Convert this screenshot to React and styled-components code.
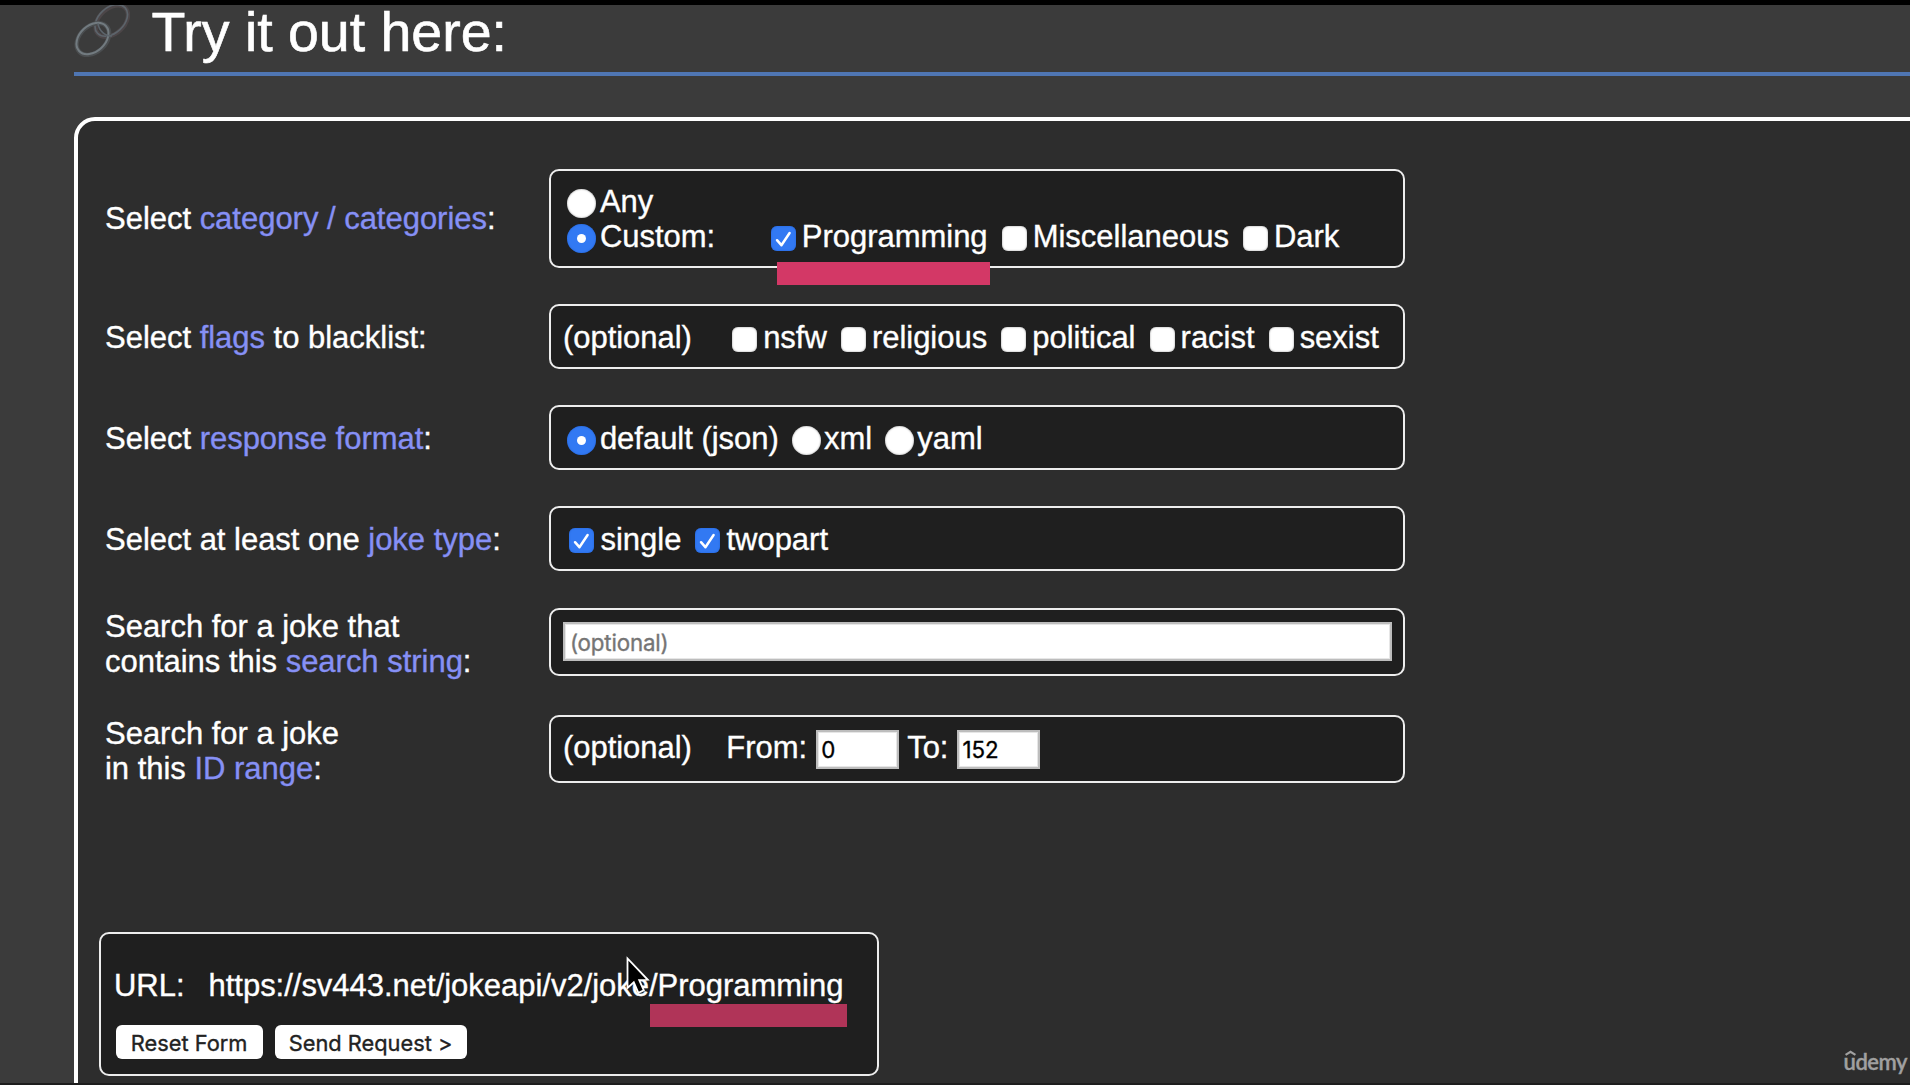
import React from "react";
import styled, { createGlobalStyle, css } from "styled-components";

const GlobalStyle = createGlobalStyle`
  * { box-sizing: border-box; }
  body {
    margin: 0;
    background: #3b3b3b;
    overflow: hidden;
  }
`;

const Page = styled.div`
  position: relative;
  display: flex;
  flex-direction: column;
  width: 1910px;
  height: 1085px;
  overflow: hidden;
  background: #3b3b3b;
  border-top: 5px solid #000;
  border-bottom: 2px solid #1d1d1d;
  color: #fff;
  font: 31px/35.4px "Liberation Sans", Arial, sans-serif;
  letter-spacing: -0.02px;
  -webkit-text-stroke: 0.35px currentColor;
`;

const Header = styled.header`
  display: flex;
  align-items: flex-start;
  flex: none;
  height: 71px;
  margin-left: 74px;
  border-bottom: 4px solid #4f76b3;
`;

const LinkIcon = styled.svg`
  flex: none;
  width: 56px;
  height: 56px;
`;

const Title = styled.h1`
  margin: -5px 0 0 21.5px;
  font-size: 55.5px;
  line-height: 64px;
  font-weight: 400;
  white-space: nowrap;
  -webkit-text-stroke-width: 0.6px;
`;

const Panel = styled.main`
  display: flex;
  flex-direction: column;
  align-items: flex-start;
  flex: none;
  width: 1900px;
  height: 1100px;
  margin: 41px 0 0 74px;
  padding: 48px 0 0 21px;
  border: 4px solid #fff;
  border-radius: 21px;
  background: #2d2d2d;
`;

const Form = styled.form`
  display: grid;
  grid-template-columns: 443.5px 856px;
  grid-template-rows: 99px 64.5px 64.5px 64.5px 71px 71px;
  row-gap: 36.4px;
  margin-left: 6px;
`;

const Row = styled.div`
  display: grid;
  grid-template-columns: subgrid;
  grid-column: 1 / -1;
  align-items: center;
`;

const Label = styled.div`
  margin: ${(p) => p.$drop ?? 1.5}px 0 -${(p) => p.$drop ?? 1.5}px;
`;

const LabelLine = styled.div`
  white-space: nowrap;
`;

const Term = styled.a`
  color: #8690f5;
`;

const boxFrame = css`
  border: 2px solid #ededed;
  border-radius: 10px;
  background: #1f1f1f;
`;

const Box = styled.div`
  ${boxFrame}
  display: flex;
  flex-direction: column;
  justify-content: center;
  height: ${(p) => p.$height}px;
  margin: -${(p) => p.$lift ?? 0}px 0 ${(p) => p.$lift ?? 0}px;
  padding: ${(p) => p.$drop ?? 2}px 0 0 12.4px;
`;

const Line = styled.div`
  display: flex;
  align-items: center;
  height: 35px;
  white-space: nowrap;
`;

const Words = styled.span`
  margin: 0 ${(p) => p.$gap ?? 0}px ${(p) => p.$raise ?? 0}px 0;
`;

const Option = styled.label`
  display: flex;
  align-items: center;
  margin-right: ${(p) => p.$gap ?? 7.5}px;
`;

const Check = styled.span`
  display: flex;
  align-items: center;
  justify-content: center;
  flex: none;
  width: 25px;
  height: 25px;
  margin: 3px 6px 0 6.6px;
  border-radius: 6px;
  background: ${(p) => (p.$on ? "#3279f3" : "#fff")};
  box-shadow: inset 0 0 2px ${(p) => (p.$on ? "#2260d0" : "#8a8a8a")};
`;

const Radio = styled.span`
  display: flex;
  align-items: center;
  justify-content: center;
  flex: none;
  width: 29px;
  height: 29px;
  margin: 3.4px 3.4px 0 4.6px;
  border-radius: 50%;
  background: ${(p) => (p.$on ? "#3279f3" : "#fff")};
  box-shadow: inset 0 0 2px ${(p) => (p.$on ? "#2260d0" : "#8a8a8a")};

  &::after {
    content: "";
    display: ${(p) => (p.$on ? "block" : "none")};
    width: 9px;
    height: 9px;
    border-radius: 50%;
    background: #fff;
  }
`;

const Field = styled.input`
  width: ${(p) => p.$width};
  height: 39px;
  margin: ${(p) => p.$margin || "0"};
  padding: 1px 4px 0 ${(p) => p.$indent || 3}px;
  border: 2px solid #bdbdbd;
  border-radius: 0;
  outline: none;
  background: #fff;
  box-shadow: inset 0 0 0 1px #e6e6e6;
  color: #000;
  font: 22.3px Inter, sans-serif;
  letter-spacing: ${(p) => p.$spacing || "0"};

  &::placeholder {
    color: #757575;
    opacity: 1;
  }
`;

const Request = styled.section`
  ${boxFrame}
  display: flex;
  flex-direction: column;
  flex: none;
  width: 780px;
  height: 144px;
  margin-top: 146.5px;
  padding: 34px 0 0 13px;
`;

const Url = styled.div`
  display: flex;
  height: 36px;
  white-space: nowrap;
`;

const UrlName = styled.span`
  width: 94.5px;
`;

const Buttons = styled.div`
  display: flex;
  gap: 12px;
  margin: 21.5px 0 0 1.6px;
`;

const Button = styled.button`
  width: ${(p) => p.$width}px;
  height: 34px;
  padding: 2px 0 0;
  border: 0;
  border-radius: 6px;
  background: #fff;
  color: #222;
  font: 21.8px Inter, sans-serif;
  white-space: nowrap;
`;

const Marker = styled.div`
  position: absolute;
  left: ${(p) => p.$x}px;
  top: ${(p) => p.$y - 5}px;
  width: ${(p) => p.$width}px;
  height: 23px;
  background: ${(p) => p.$color};
`;

const Cursor = styled.svg`
  position: absolute;
  left: 625px;
  top: 950px;
  width: 28px;
  height: 42px;
`;

const Watermark = styled.div`
  position: absolute;
  right: 3px;
  bottom: 8px;
  color: #a0a0a0;
  font: 600 22px/26px Lato, sans-serif;
  letter-spacing: -0.5px;
`;

const Hat = styled.svg`
  position: absolute;
  left: 1px;
  top: 1px;
  width: 11px;
  height: 6px;
`;

const Tick = () => (
  <svg width="17" height="18" viewBox="0 0 17 18" fill="none">
    <path d="M2 10.2 6.4 15.2 14.6 3" stroke="#fff" strokeWidth="2.5" strokeLinecap="round" strokeLinejoin="round" />
  </svg>
);

const CheckOption = ({ on, gap, children }) => (
  <Option $gap={gap}>
    <Check $on={on}>{on && <Tick />}</Check>
    {children}
  </Option>
);

const RadioOption = ({ on, gap, children }) => (
  <Option $gap={gap ?? 8.2}>
    <Radio $on={on} />
    {children}
  </Option>
);

const flags = ["nsfw", "religious", "political", "racist", "sexist"];

export default function App() {
  return (
    <Page>
      <GlobalStyle />
      <Header>
        <LinkIcon viewBox="0 5 56 56" fill="none">
          <ellipse cx="37.8" cy="21" rx="18.8" ry="12.5" transform="rotate(-43 37.8 21)" stroke="#4c4648" strokeWidth="4.4" />
          <ellipse cx="37.3" cy="20.4" rx="18.8" ry="12.7" transform="rotate(-43 37.3 20.4)" stroke="#5c646b" strokeWidth="1.7" />
          <ellipse cx="18.9" cy="39" rx="18.6" ry="13" transform="rotate(-43 18.9 39)" stroke="#4b4e50" strokeWidth="4.4" />
          <ellipse cx="18.5" cy="38.5" rx="18.3" ry="12.9" transform="rotate(-43 18.5 38.5)" stroke="#727b80" strokeWidth="2" />
          <path d="M24 23.5C25 31 31 36 38 36" stroke="#5c646b" strokeWidth="1.7" />
        </LinkIcon>
        <Title>Try it out here:</Title>
      </Header>

      <Panel>
        <Form>
          <Row>
            <Label $drop={0}>Select <Term>category / categories</Term>:</Label>
            <Box $height={99}>
              <Line><RadioOption>Any</RadioOption></Line>
              <Line>
                <RadioOption on gap={49}>Custom:</RadioOption>
                <CheckOption on>Programming</CheckOption>
                <CheckOption>Miscellaneous</CheckOption>
                <CheckOption>Dark</CheckOption>
              </Line>
            </Box>
          </Row>
          <Row>
            <Label>Select <Term>flags</Term> to blacklist:</Label>
            <Box $height={64.5}>
              <Line>
                <Words $gap={33.6}>(optional)</Words>
                {flags.map((flag) => <CheckOption key={flag}>{flag}</CheckOption>)}
              </Line>
            </Box>
          </Row>
          <Row>
            <Label>Select <Term>response format</Term>:</Label>
            <Box $height={64.5}>
              <Line>
                <RadioOption on>default (json)</RadioOption>
                <RadioOption>xml</RadioOption>
                <RadioOption>yaml</RadioOption>
              </Line>
            </Box>
          </Row>
          <Row>
            <Label>Select at least one <Term>joke type</Term>:</Label>
            <Box $height={64.5}>
              <Line>
                <CheckOption on>single</CheckOption>
                <CheckOption on>twopart</CheckOption>
              </Line>
            </Box>
          </Row>
          <Row>
            <Label>
              <LabelLine>Search for a joke that</LabelLine>
              <LabelLine>contains this <Term>search string</Term>:</LabelLine>
            </Label>
            <Box $height={68.5} $drop={0} $lift={0.8}>
              <Field $width="829px" $indent={5} $spacing="-0.15px" placeholder="(optional)" />
            </Box>
          </Row>
          <Row>
            <Label>
              <LabelLine>Search for a joke</LabelLine>
              <LabelLine>in this <Term>ID range</Term>:</LabelLine>
            </Label>
            <Box $height={68.5} $drop={0} $lift={0.8}>
              <Line>
                <Words $gap={34.4} $raise={2}>(optional)</Words>
                <Words $raise={2}>From:</Words>
                <Field $width="83px" $margin="0 8px 0 9px" defaultValue="0" />
                <Words $raise={2}>To:</Words>
                <Field $width="83px" $margin="0 0 0 9px" defaultValue="152" />
              </Line>
            </Box>
          </Row>
        </Form>

        <Request>
          <Url>
            <UrlName>URL:</UrlName>
            <span>https://sv443.net/jokeapi/v2/joke/Programming</span>
          </Url>
          <Buttons>
            <Button $width={147}>Reset Form</Button>
            <Button $width={192}>Send Request &gt;</Button>
          </Buttons>
        </Request>
      </Panel>

      <Marker $x={777} $y={262} $width={213} $color="#d33866" />
      <Marker $x={650} $y={1004} $width={197} $color="#b03458" />
      <Cursor viewBox="0 0 28 42">
        <path d="M2.5 3.5V33l6.3-5.7 4.6 10.5 5.4-2.4-4.6-10.2 8.6-.4Z" fill="#000" stroke="#fff" strokeWidth="1.8" />
      </Cursor>
      <Watermark>
        <Hat viewBox="0 0 12 6" fill="none"><path d="M.6 5 6 1.6 11.4 5" stroke="#a0a0a0" strokeWidth="2.4" /></Hat>
        udemy
      </Watermark>
    </Page>
  );
}
